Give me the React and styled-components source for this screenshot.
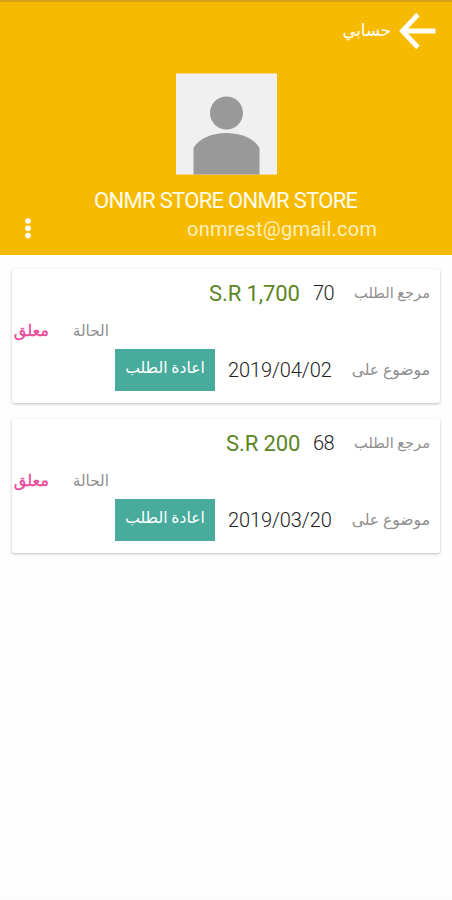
import React from 'react';
import styled, { createGlobalStyle } from 'styled-components'

const GlobalStyle = createGlobalStyle`
  body {
    margin: 0;
    background: #fefefe;
    font-family: Roboto, 'DejaVu Sans', sans-serif;
  }
`

const Screen = styled.div`
  height: 900px;
  overflow: hidden;
  box-sizing: border-box;
  border-bottom: 5px solid #fcfcfc;
`

const Header = styled.header`
  height: 255px;
  box-sizing: border-box;
  border-top: 2px solid #d5a21c;
  background: #f6bb00;
  color: #fff;
  display: flex;
  flex-direction: column;
`

const TopBar = styled.div`
  height: 57px;
  padding-right: 16px;
  box-sizing: border-box;
  display: flex;
  align-items: center;
  gap: 8px;

  svg {
    display: block;
  }
`

const Avatar = styled.svg`
  display: block;
  margin: 14px 175px 0 0;
  flex: none;
`

const UserName = styled.div`
  height: 28px;
  margin: 12px 94px 0 0;
  line-height: 28px;
  color: #fffbea;
`

const EmailRow = styled.div`
  height: 28px;
  line-height: 28px;
  padding: 0 75px 0 24px;
  display: flex;
  justify-content: space-between;
  align-items: center;
  color: #fff0bd;

  svg {
    display: block;
    margin-bottom: 2px;
  }
`

const Orders = styled.main`
  padding: 14px 12px;
  display: flex;
  flex-direction: column;
  gap: 16px;
`

const Card = styled.section`
  height: 134px;
  box-sizing: border-box;
  padding: 4px 10px 0 2px;
  border-radius: 3px;
  background: #fff;
  box-shadow: 0 1px 3px rgba(0, 0, 0, 0.26);
`

const Row = styled.div`
  height: ${props => props.$height}px;
  display: flex;
  align-items: center;
  justify-content: ${props => props.$end ? 'flex-end' : 'flex-start'};
  gap: ${props => props.$gap || 0}px;
`

const Text = styled.span`
  width: ${props => props.$width}px;
  flex: none;
  display: block;
  direction: ${props => props.$ltr ? 'ltr' : 'rtl'};
  font-size: ${props => props.$size}px;
  font-weight: ${props => props.$weight || 400};
  letter-spacing: ${props => props.$spacing ? `${props.$spacing}px` : 'normal'};
  color: ${props => props.$color || 'inherit'};
  white-space: nowrap;
`

const Label = styled(Text)`
  color: #8f8f8f;
  padding-bottom: 1px;
`

const Status = styled(Text)`
  color: #ea4899;
  padding-bottom: 2px;
  -webkit-text-stroke: 0.3px #ea4899;
`

const ReorderButton = styled.button`
  width: 100px;
  height: 42px;
  margin-right: 3px;
  padding: 0 10px 4px;
  border: none;
  background: #48ab9c;
  color: #fff;
  font-family: inherit;
`

const orders = [
  { ref: '70', price: 'S.R 1,700', priceWidth: 91, date: '2019/04/02' },
  { ref: '68', price: 'S.R 200', priceWidth: 74, date: '2019/03/20' },
]

const BackArrow = () => (
  <svg width="37" height="38" viewBox="0 0 37 38" fill="none" stroke="#fff" strokeWidth="4.8">
    <path d="M36.5 19H5M19 2.5L3.4 19L19 35.5" />
  </svg>
)

const OrderCard = ({ order }) => (
  <Card>
    <Row $height={40} $gap={13}>
      <Label $width={83} $size={14.6}>مرجع الطلب</Label>
      <Text $ltr $width={21} $size={20} $weight={300} $spacing={-0.5} $color="#222">{order.ref}</Text>
      <Text $ltr $width={order.priceWidth} $size={22} $spacing={-0.1} $color="#5b851f">{order.price}</Text>
    </Row>
    <Row $height={36} $end $gap={24}>
      <Label $width={36} $size={15.3}>الحالة</Label>
      <Status $width={35} $size={16.2}>معلق</Status>
    </Row>
    <Row $height={42} $gap={10}>
      <Label $width={89} $size={15.6}>موضوع على</Label>
      <Text $ltr $width={103} $size={20} $weight={300} $spacing={-0.1} $color="#222">{order.date}</Text>
      <ReorderButton>
        <Text $width={80} $size={15.6}>اعادة الطلب</Text>
      </ReorderButton>
    </Row>
  </Card>
)

const App = () => {
  return <Screen dir="rtl">
    <GlobalStyle />
    <Header>
      <TopBar>
        <BackArrow />
        <Text $width={50} $size={16.6}>حسابي</Text>
      </TopBar>
      <Avatar width="101" height="102" viewBox="0 0 101 102">
        <rect y="0.5" width="101" height="101" fill="#f0f0f0" />
        <circle cx="50.5" cy="40" r="16.5" fill="#999" />
        <path d="M17.5 101.5V75C23 65 37 60 50.5 60S78 65 83.5 75V101.5Z" fill="#999" />
      </Avatar>
      <UserName>
        <Text $ltr $width={264} $size={22} $spacing={-0.68}>ONMR STORE ONMR STORE</Text>
      </UserName>
      <EmailRow>
        <Text $ltr $width={190} $size={20} $spacing={0.24}>onmrest@gmail.com</Text>
        <svg width="8" height="22" viewBox="0 0 8 22" fill="#fff">
          <circle cx="4" cy="4" r="2.8" />
          <circle cx="4" cy="11.3" r="2.8" />
          <circle cx="4" cy="18.6" r="2.8" />
        </svg>
      </EmailRow>
    </Header>
    <Orders>
      {orders.map(order => <OrderCard key={order.ref} order={order} />)}
    </Orders>
  </Screen>
}

export default App
